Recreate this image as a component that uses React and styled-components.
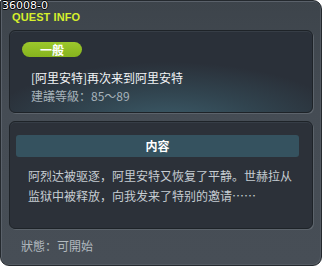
import React from 'react';
import styled, { createGlobalStyle } from 'styled-components';

const GlobalStyle = createGlobalStyle`
	html, body {
		margin: 0;
		padding: 0;
		background: #ffffff;
	}
	body {
		font-family: "Noto Sans CJK SC", "Noto Sans", sans-serif;
	}
`;

const Frame = styled.div`
	position: relative;
	box-sizing: border-box;
	width: 322px;
	height: 266px;
	padding: 0 8px;
	display: flex;
	flex-direction: column;
	background: linear-gradient(180deg, #3d444b 0%, #454c54 40%, #474e56 100%);
	border: 1px solid #24292e;
	border-radius: 2px 9px 9px 9px;
	box-shadow: inset 1px 1px 0 #5a616a, inset -1px -1px 0 #545b63;
`;

const IdTag = styled.div`
	position: absolute;
	top: -1px;
	left: 1px;
	font-family: "DejaVu Sans", sans-serif;
	font-size: 11px;
	line-height: 12px;
	color: #ffffff;
	text-shadow: 1px 0 0 #000, -1px 0 0 #000, 0 1px 0 #000, 0 -1px 0 #000;
`;

const Title = styled.div`
	height: 29px;
	box-sizing: border-box;
	padding: 10px 0 0 3px;
	font-family: "Liberation Sans", "Arial", sans-serif;
	font-weight: bold;
	font-size: 11px;
	line-height: 13px;
	letter-spacing: 0.1px;
	color: #d6ef2c;
`;

const Panel = styled.div`
	box-sizing: border-box;
	border: 1px solid #1e2328;
	border-radius: 6px;
	box-shadow: 1px 1px 0 #5c636b, inset 0 1px 0 #363d46;
`;

const UpperPanel = styled(Panel)`
	height: 83px;
	padding: 11px 12px 0;
	background: radial-gradient(ellipse 70% 90% at 52% 115%, #3c5c6a 0%, #31444f 45%, #2a3039 85%);
`;

const LowerPanel = styled(Panel)`
	height: 108px;
	margin-top: 8px;
	padding: 13px 13px 0 6px;
	background: #2c3139;
`;

const Pill = styled.div`
	width: 60px;
	height: 15px;
	border-radius: 8px;
	background: linear-gradient(180deg, #9cc82c 0%, #86b31e 100%);
	color: #ffffff;
	font-weight: bold;
	font-size: 12px;
	line-height: 15px;
	text-align: center;
`;

const QuestName = styled.div`
	margin: 13px 0 0 9px;
	font-size: 12px;
	line-height: 16px;
	color: #f2f4f6;
`;

const Level = styled.div`
	margin: 2px 0 0 9px;
	font-size: 12px;
	line-height: 16px;
	color: #a7b3bb;
`;

const SectionBar = styled.div`
	height: 22px;
	border-radius: 3px;
	background: #35525f;
	color: #ffffff;
	font-weight: bold;
	font-size: 12px;
	line-height: 22px;
	text-align: center;
`;

const Story = styled.p`
	margin: 9px 0 0 12px;
	font-size: 12px;
	line-height: 19.5px;
	color: #c6cdd3;
`;

const Status = styled.div`
	margin: 9px 0 0 12px;
	font-size: 12px;
	line-height: 16px;
	color: #b2b9bf;
`;

const App = () => {
	return (
		<>
			<GlobalStyle />
			<Frame>
				<IdTag>36008-0</IdTag>
				<Title>QUEST INFO</Title>
				<UpperPanel>
					<Pill>一般</Pill>
					<QuestName>[阿里安特]再次来到阿里安特</QuestName>
					<Level>建議等級：85～89</Level>
				</UpperPanel>
				<LowerPanel>
					<SectionBar>内容</SectionBar>
					<Story>
						阿烈达被驱逐，阿里安特又恢复了平静。世赫拉从
						<br />
						监狱中被释放，向我发来了特别的邀请……
					</Story>
				</LowerPanel>
				<Status>狀態：可開始</Status>
			</Frame>
		</>
	);
};

export default App;
